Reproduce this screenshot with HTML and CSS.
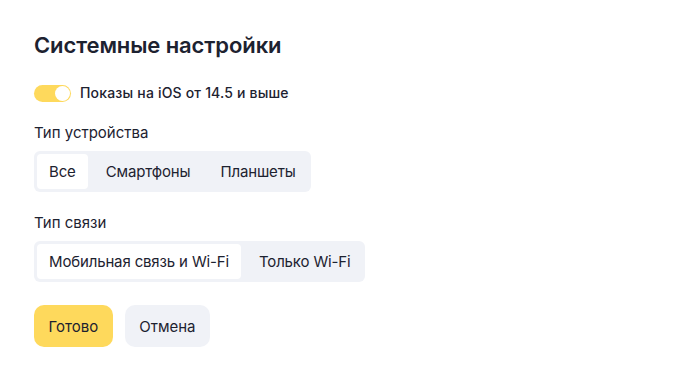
FILE: index.html
```html
<!DOCTYPE html>
<html lang="ru">
<head>
<meta charset="utf-8">
<title>Системные настройки</title>
<link rel="stylesheet" href="styles.css">
</head>
<body>
<div class="panel">
  <h1 class="title">Системные настройки</h1>
  <label class="switch-row">
    <span class="switch"><span class="knob"></span></span>
    <span class="switch-text">Показы на iOS от 14.5 и выше</span>
  </label>
  <div class="field-label">Тип устройства</div>
  <div class="segmented">
    <button class="seg seg-active">Все</button>
    <button class="seg">Смартфоны</button>
    <button class="seg">Планшеты</button>
  </div>
  <div class="field-label">Тип связи</div>
  <div class="segmented">
    <button class="seg seg-active">Мобильная связь и Wi-Fi</button>
    <button class="seg">Только Wi-Fi</button>
  </div>
  <div class="actions">
    <button class="btn btn-primary">Готово</button>
    <button class="btn btn-secondary">Отмена</button>
  </div>
</div>
</body>
</html>
```
FILE: styles.css
```css
html, body {
  margin: 0;
  padding: 0;
  background: #ffffff;
}
body {
  font-family: Inter, "Noto Sans", "Liberation Sans", sans-serif;
  color: #1d2230;
}
.panel {
  padding: 31px 34px;
  display: flex;
  flex-direction: column;
  align-items: flex-start;
}
.title {
  margin: 0;
  font-size: 22px;
  line-height: 28px;
  font-weight: 600;
  letter-spacing: -0.1px;
}
.switch-row {
  margin-top: 25px;
  display: flex;
  align-items: center;
  gap: 9px;
}
.switch {
  width: 37px;
  height: 17px;
  border-radius: 9px;
  background: #fed95c;
  display: flex;
  align-items: center;
  justify-content: flex-end;
  padding: 0 1px;
  box-sizing: border-box;
}
.knob {
  width: 15px;
  height: 15px;
  border-radius: 50%;
  background: #ffffff;
}
.switch-text {
  font-size: 14px;
  font-weight: 500;
  line-height: 18px;
  letter-spacing: 0.18px;
}
.field-label {
  margin-top: 21px;
  margin-bottom: 8px;
  font-size: 15px;
  line-height: 20px;
}
.segmented {
  display: flex;
  gap: 6px;
  padding: 3px;
  background: #f0f2f7;
  border-radius: 6px;
}
.seg {
  font: inherit;
  font-size: 15px;
  letter-spacing: -0.15px;
  color: #1d2230;
  height: 35px;
  padding: 0 12px;
  border: 0;
  border-radius: 4px;
  background: transparent;
}
.seg-active {
  background: #ffffff;
}
.actions {
  margin-top: 23px;
  display: flex;
  gap: 12px;
}
.btn {
  font: inherit;
  font-size: 15px;
  color: #1d2230;
  height: 42px;
  padding: 0 14.5px;
  border: 0;
  border-radius: 10px;
}
.btn-primary {
  background: #fed95c;
}
.btn-secondary {
  background: #f0f2f7;
}
```
